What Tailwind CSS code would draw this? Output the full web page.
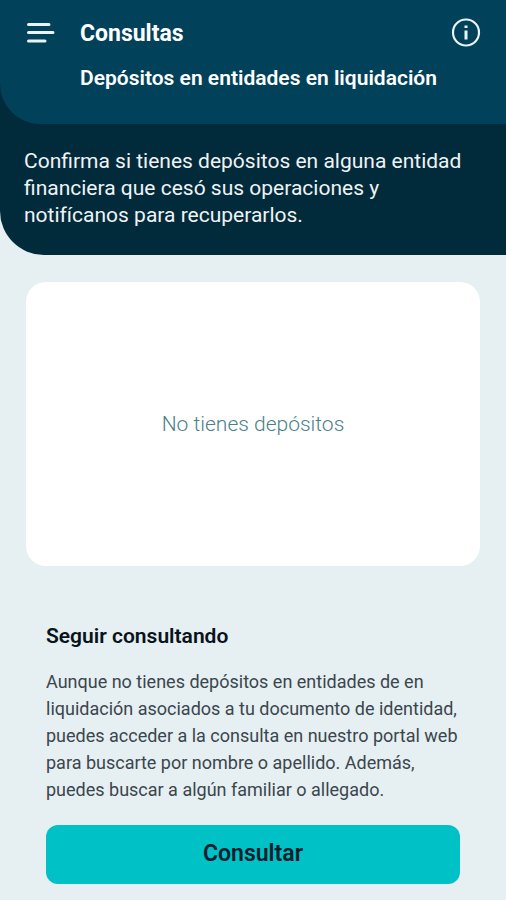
<!DOCTYPE html>
<html lang="es">
<head>
<meta charset="utf-8">
<meta name="viewport" content="width=device-width, initial-scale=1">
<title>Consultas</title>
<script src="https://cdn.jsdelivr.net/npm/@tailwindcss/browser@4"></script>
</head>
<body class="min-h-screen bg-[#e6eff2] font-[Roboto,'Liberation_Sans',sans-serif]">
<div class="rounded-bl-[44px] bg-[#012a3b]">
  <header class="flex items-start rounded-bl-[40px] bg-[#01415a] px-6 pt-4 pb-8 text-white">
    <button type="button" aria-label="Menú" class="mr-6 flex h-8 w-8 shrink-0 items-center justify-center">
      <svg class="h-8 w-8" viewBox="0 0 32 32" fill="none" stroke="#e9f3f8" stroke-width="3" stroke-linecap="round"><path d="M4.500 8.500H25M4.500 16.500H29M4.500 25H21"/></svg>
    </button>
    <div class="min-w-0 flex-1">
      <h1 class="text-[23px] leading-9 font-bold">Consultas</h1>
      <p class="mt-3 -mr-8 text-[21px] leading-7 font-semibold">Depósitos en entidades en liquidación</p>
    </div>
    <button type="button" aria-label="Información" class="flex h-8 w-8 shrink-0 items-center justify-center">
      <svg class="h-8 w-8" viewBox="0 0 32 32" fill="none" stroke="#e9f3f8"><circle cx="16" cy="16.500" r="13" stroke-width="2.200"/><path d="M16 14.500V23.500M16 9.500V12" stroke-width="3"/></svg>
    </button>
  </header>
  <p class="px-6 pt-6 pb-[26px] text-[21px] leading-[27px] text-[#f0f3f5]">Confirma si tienes depósitos en alguna entidad financiera que cesó sus operaciones y notifícanos para recuperarlos.</p>
</div>
<main class="px-[26px] pt-[27px] pb-4">
  <section class="flex min-h-[284px] items-center justify-center rounded-[20px] bg-white">
    <p class="text-[21px] leading-7 font-light text-[#4b7f8a]">No tienes depósitos</p>
  </section>
  <section class="px-5 pt-14">
    <h2 class="text-[21px] leading-7 font-semibold text-[#08141b]">Seguir consultando</h2>
    <p class="mt-[18px] text-[18px] leading-[27px] text-[#3a464c]">Aunque no tienes depósitos en entidades de en liquidación asociados a tu documento de identidad, puedes acceder a la consulta en nuestro portal web para buscarte por nombre o apellido. Además, puedes buscar a algún familiar o allegado.</p>
    <button type="button" class="mt-[22px] h-[59px] w-full rounded-xl bg-[#00c1c6] text-[23px] font-semibold text-[#01202c]">Consultar</button>
  </section>
</main>
</body>
</html>
